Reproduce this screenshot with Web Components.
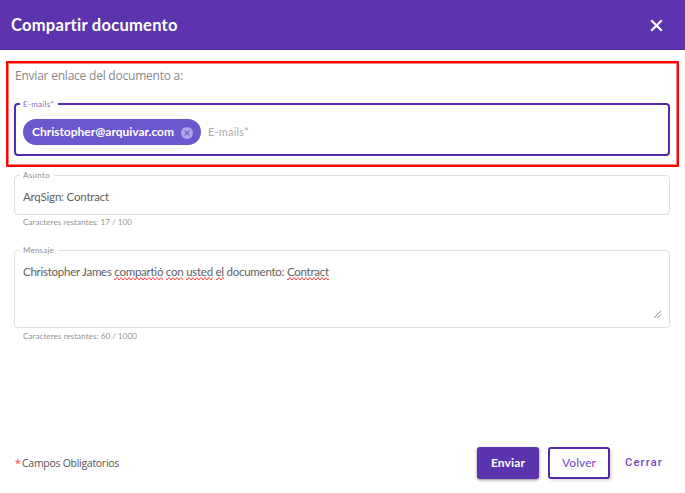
<!DOCTYPE html>
<html lang="es"><head><meta charset="utf-8"><title>Compartir documento</title>
<style>html,body{margin:0;background:#fff}body{font-family:Lato,"Open Sans",sans-serif}</style></head>
<body><share-dialog></share-dialog>
<script>
const define=(name,html,init)=>customElements.define(name,class extends HTMLElement{
  constructor(){super();const t=document.createElement('template');t.innerHTML=html;this.attachShadow({mode:'open'}).append(t.content.cloneNode(true));}
  connectedCallback(){if(init)init(this,this.shadowRoot);}
});

/* One line of text, tracked out or in to the width given in its w attribute. */
define('fit-text',`<style>:host{display:block;white-space:nowrap;width:max-content}span{display:inline-block}</style><span><slot></slot></span>`,
 (el,root)=>{const s=root.querySelector('span');const n=el.textContent.length;
  s.style.letterSpacing='0px';const w=s.getBoundingClientRect().width;
  s.style.letterSpacing=((+el.getAttribute('w')-w)/n)+'px';});

define('spell-word',`<style>:host{display:inline;padding-bottom:3px;background:url("data:image/svg+xml,%3Csvg xmlns='http://www.w3.org/2000/svg' width='4' height='4'%3E%3Cpath d='M-1 .5L1 3L3 .5L5 3' fill='none' stroke='%23f44' stroke-width='1'/%3E%3C/svg%3E") left bottom/4px 4px repeat-x}</style><slot></slot>`);

define('dialog-header',`<style>:host{display:flex;box-sizing:border-box;height:50px;padding:0 22px 0 11px;align-items:center;justify-content:space-between;background:#5c35ae;color:#fff;border-bottom:1px solid #5127a5}
fit-text{font:700 16.5px/24px Lato,sans-serif}svg{display:block;margin-top:1px}</style>
<fit-text w="167">Compartir documento</fit-text>
<svg width="13" height="13" viewBox="0 0 13 13"><path d="M1.2 1.2L11.8 11.8M11.8 1.2L1.2 11.8" stroke="#fff" stroke-width="2.2"/></svg>`);

define('outlined-field',`<style>:host{display:block;position:relative;box-sizing:border-box;border:1px solid #dfdfdf;border-radius:4px;color:#606060}
:host([active]){border:2px solid #5529a8}
.label{position:absolute;left:5px;top:-6px;padding:0 4px 0 3px;background:#fff;color:#929292;font-size:8px;line-height:10px}
:host([active]) .label{left:4px;color:#8b68cb}</style>
<div class="label"><slot name="label"></slot></div><slot></slot>`);

define('email-chip',`<style>:host{display:flex;box-sizing:border-box;width:178px;height:26px;border-radius:13px;background:#6b57ce;color:#fff;align-items:center;justify-content:space-between;padding:0 8px 0 9px;font-weight:700;font-size:12px;line-height:20px}
svg{display:block;margin-top:1px}</style><slot></slot>
<svg width="12" height="12" viewBox="0 0 12 12"><circle cx="6" cy="6" r="6" fill="#b0a5e5"/><path d="M3.7 3.7L8.3 8.3M8.3 3.7L3.7 8.3" stroke="#6b57ce" stroke-width="1.2"/></svg>`);

define('dialog-button',`<style>:host{display:flex;box-sizing:border-box;align-items:center;justify-content:center;height:32px;width:62px;border-radius:3px;color:#7046be;font-size:12px;line-height:18px}
:host([kind=primary]){background:#5c33ae;color:#fff;font-weight:700;box-shadow:0 1px 3px #0007}
:host([kind=outline]){border:2px solid #5529a8;background:#fff;box-shadow:2px 2px 3px #0002}
:host([kind=text]){width:38px;font-family:Roboto,sans-serif;font-weight:500;font-size:11px}</style><slot></slot>`);

define('share-dialog',`<style>
:host{display:flex;flex-direction:column;width:685px;height:493px;overflow:hidden;background:#fff}
.highlight{box-sizing:border-box;height:106px;margin:11px 6px 0 6px;border:2px solid #f00;border-radius:1px;box-shadow:inset 0 0 0 1px #ff000080;padding:4px 7px 0 6px}
.intro{font:12px/18px "Open Sans",sans-serif;color:#888;margin-left:1px}
.emails{height:53px;margin-top:18px}
.row{display:flex;align-items:center;gap:7px;padding:14px 0 0 7px}
.hint{font-size:11px;line-height:18px;color:#adadad}
.fields{padding:8px 15px 0 14px}
.subject{height:40px;padding:12px 8px 0}
.value{font-size:11.5px;line-height:18px}
.counter{margin:2px 0 0 9px;font-size:8px;line-height:10px;color:#939393}
.message{height:78px;margin-top:23px;padding:12px 7px 8px 8px;display:flex;flex-direction:column;justify-content:space-between}
.message + .counter{margin-top:3px}
.message svg{align-self:flex-end;display:block}
footer{display:flex;margin-top:auto;height:33px;padding:0 22px 14px 15px;align-items:center}
.required{display:flex;flex:1;gap:2px;font:10.5px/18px "Open Sans",sans-serif;color:#555}
.required i{color:#f33;font-style:normal;width:5px}
.actions{display:flex}.actions [kind=outline]{margin:0 15px 0 9px}
</style>
<dialog-header></dialog-header>
<section class="highlight"><fit-text class="intro" w="168">Enviar enlace del documento a:</fit-text>
<outlined-field class="emails" active><fit-text slot="label" w="31">E-mails*</fit-text>
<div class="row"><email-chip><fit-text w="142">Christopher@arquivar.com</fit-text></email-chip><fit-text class="hint" w="41">E-mails*</fit-text></div></outlined-field></section>
<section class="fields">
<outlined-field class="subject"><fit-text slot="label" w="27">Asunto</fit-text><fit-text class="value" w="86">ArqSign: Contract</fit-text></outlined-field>
<fit-text class="counter" w="109">Caracteres restantes: 17 / 100</fit-text>
<outlined-field class="message"><fit-text slot="label" w="31">Mensaje</fit-text>
<fit-text class="value" w="306">Christopher James <spell-word>compartió</spell-word> <spell-word>con</spell-word> <spell-word>usted</spell-word> <spell-word>el</spell-word> documento: <spell-word>Contract</spell-word></fit-text>
<svg width="9" height="9" viewBox="0 0 9 9"><path d="M1 8L8 1M4.5 8L8 4.5" stroke="#888" fill="none"/></svg></outlined-field>
<fit-text class="counter" w="114">Caracteres restantes: 60 / 1000</fit-text></section>
<footer><div class="required"><i>*</i><fit-text w="97">Campos Obligatorios</fit-text></div>
<div class="actions"><dialog-button kind="primary"><fit-text w="34">Enviar</fit-text></dialog-button><dialog-button kind="outline"><fit-text w="34">Volver</fit-text></dialog-button><dialog-button kind="text"><fit-text w="38">Cerrar</fit-text></dialog-button></div></footer>`);
</script></body></html>
